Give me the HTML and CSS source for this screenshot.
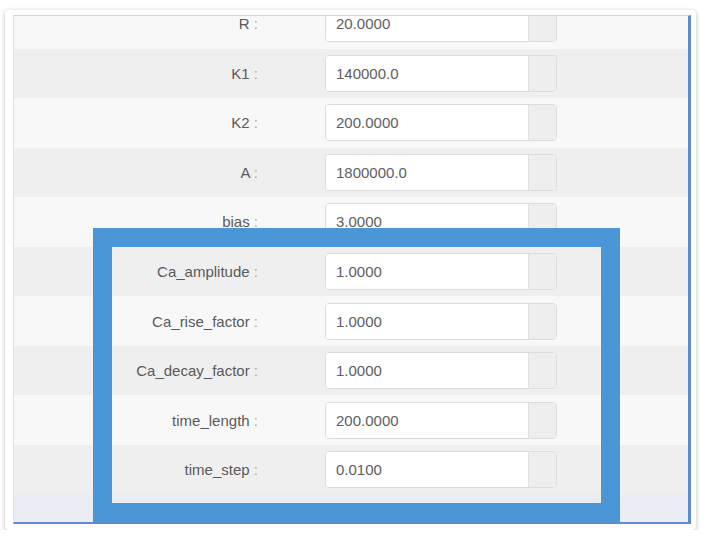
FILE: index.html
```html
<!DOCTYPE html>
<html>
<head>
<meta charset="utf-8">
<link rel="stylesheet" href="styles.css">
</head>
<body>
<div class="card">
  <div class="viewport">
    <div class="rows">
      <div class="row light"><label class="lbl">R<span class="colon"> :</span></label><div class="group"><input class="field" value="20.0000"><span class="addon"></span></div></div>
      <div class="row dark"><label class="lbl">K1<span class="colon"> :</span></label><div class="group"><input class="field" value="140000.0"><span class="addon"></span></div></div>
      <div class="row light"><label class="lbl">K2<span class="colon"> :</span></label><div class="group"><input class="field" value="200.0000"><span class="addon"></span></div></div>
      <div class="row dark"><label class="lbl">A<span class="colon"> :</span></label><div class="group"><input class="field" value="1800000.0"><span class="addon"></span></div></div>
      <div class="row light"><label class="lbl">bias<span class="colon"> :</span></label><div class="group"><input class="field" value="3.0000"><span class="addon"></span></div></div>
      <div class="row dark"><label class="lbl">Ca_amplitude<span class="colon"> :</span></label><div class="group"><input class="field" value="1.0000"><span class="addon"></span></div></div>
      <div class="row light"><label class="lbl">Ca_rise_factor<span class="colon"> :</span></label><div class="group"><input class="field" value="1.0000"><span class="addon"></span></div></div>
      <div class="row dark"><label class="lbl">Ca_decay_factor<span class="colon"> :</span></label><div class="group"><input class="field" value="1.0000"><span class="addon"></span></div></div>
      <div class="row light"><label class="lbl">time_length<span class="colon"> :</span></label><div class="group"><input class="field" value="200.0000"><span class="addon"></span></div></div>
      <div class="row dark"><label class="lbl">time_step<span class="colon"> :</span></label><div class="group"><input class="field" value="0.0100"><span class="addon"></span></div></div>
    </div>
  </div>
</div>
<div class="highlight"></div>
</body>
</html>
```
FILE: styles.css
```css
html, body {
  margin: 0;
  padding: 0;
  background: #ffffff;
  font-family: "Liberation Sans", Arial, sans-serif;
}

.card {
  width: 691px;
  height: 520px;
  margin: 10px 0 0 5px;
  padding: 5px 5px 6px 8px;
  box-sizing: border-box;
  background: #ffffff;
  border-radius: 4px;
  box-shadow: 0 1px 4px rgba(0, 0, 0, 0.28);
}

.viewport {
  height: 100%;
  box-sizing: border-box;
  overflow: hidden;
  background: #eaeef4;
  border-left: 1px solid #e2e2e2;
  border-top: 1px solid #cdd6e1;
  border-right: 3px solid #5b8bd1;
  border-bottom: 2px solid #5b8bd1;
}

.rows {
  margin-top: -17px;
}

.row {
  height: 49.56px;
  display: flex;
  align-items: center;
  gap: 67px;
}

.row.light { background: #f8f8f8; }
.row.dark { background: #efefef; }

.lbl {
  width: 244px;
  text-align: right;
  font-size: 15px;
  color: #5a5a5a;
  white-space: nowrap;
}

.colon {
  color: #a8a8a8;
}

.group {
  width: 232px;
  height: 37px;
  display: flex;
  box-sizing: border-box;
  border: 1px solid #dcdcdc;
  border-radius: 4px;
  overflow: hidden;
  background: #ffffff;
}

.field {
  flex: 1;
  min-width: 0;
  border: 0;
  margin: 0;
  padding: 0 0 0 10px;
  font-family: "Liberation Sans", Arial, sans-serif;
  font-size: 15px;
  color: #5e5e5e;
  background: #ffffff;
  outline: none;
}

.addon {
  width: 27px;
  background: #eeeeee;
  border-left: 1px solid #e0e0e0;
}

.highlight {
  position: absolute;
  left: 93px;
  top: 228px;
  width: 527px;
  height: 294px;
  box-sizing: border-box;
  border: 19px solid #4a96d6;
}
```
